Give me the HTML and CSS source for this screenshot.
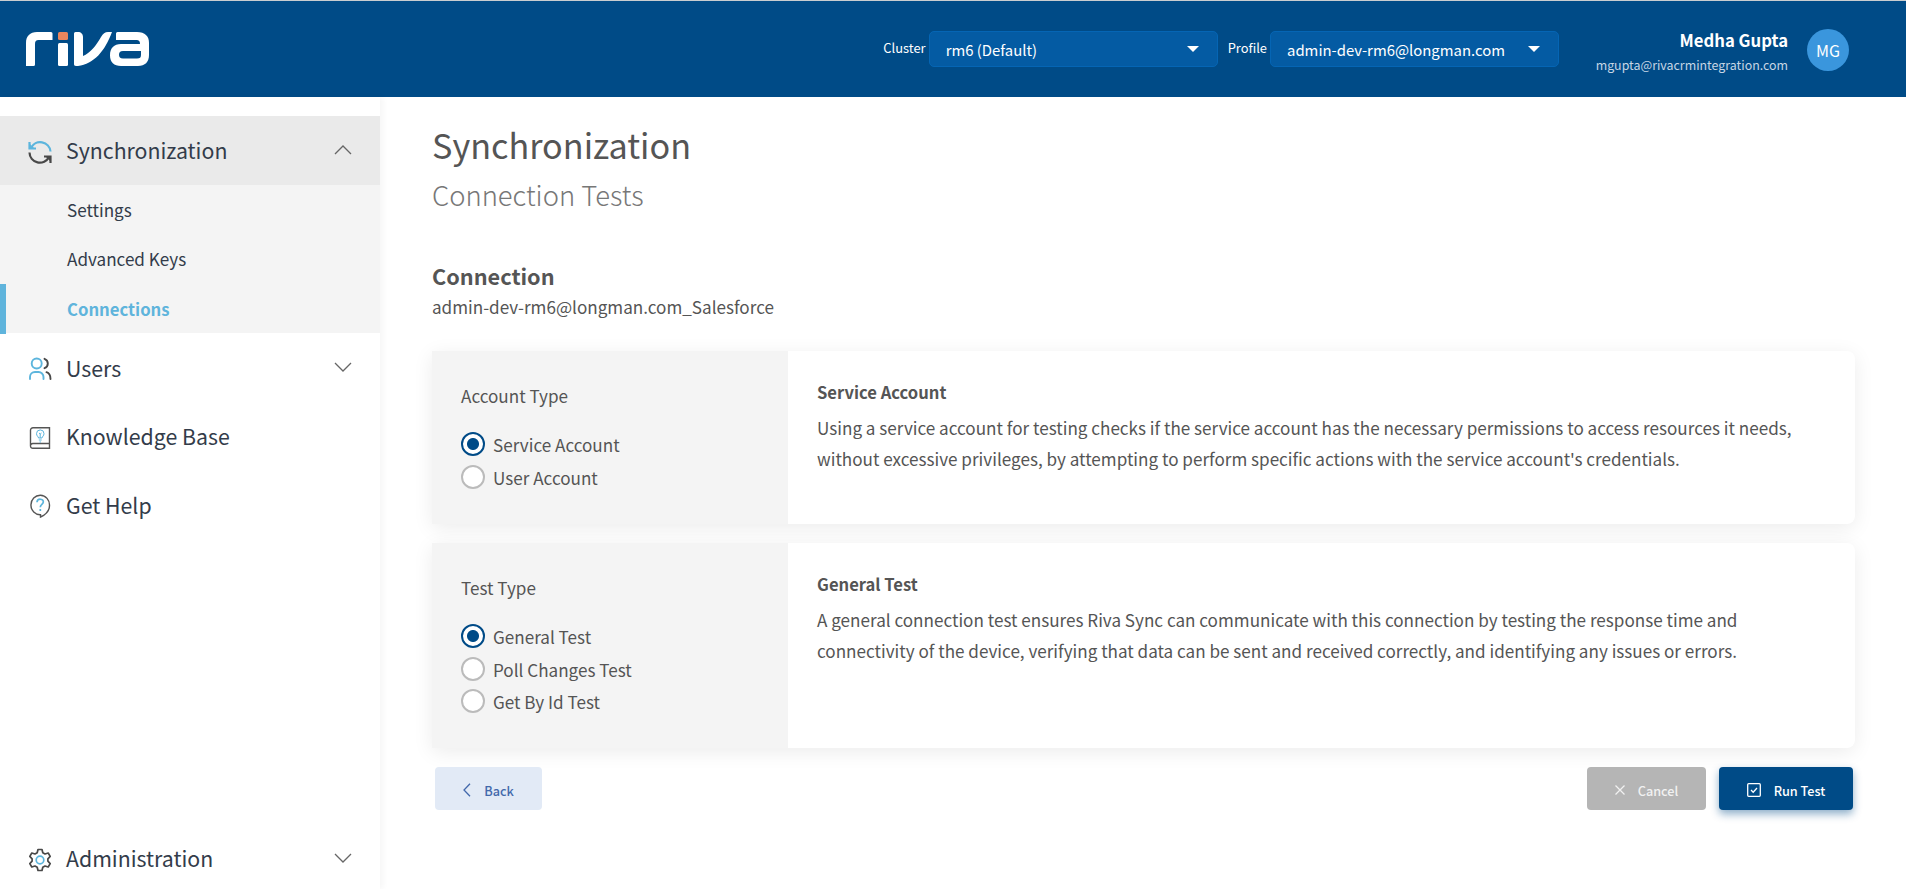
FILE: index.html
```
<!DOCTYPE html>
<html lang="en">
<head>
<meta charset="UTF-8" />
<meta name="viewport" content="width=device-width, initial-scale=1" />
<title>Riva - Connection Tests</title>
<link rel="stylesheet" href="styles.css">
</head>
<body>
  <header class="topbar">
    <svg class="logo" viewBox="0 0 123 34" role="img" aria-label="riva">
      <g fill="#fff">
        <path d="M0 34V11C0 4 4 0 11 0H25a1.5 1.5 0 0 1 1.500 1.500V8H12.500C10 8 9 9.500 9 12V32.500A1.500 1.500 0 0 1 7.500 34Z" />
        <rect x="32" y="11" width="10" height="23" rx="1.500" />
        <path d="M48 1.500A1.500 1.500 0 0 1 49.500 0H52C55 0 57 2 57 5V24C64 21 70 14 75 5 77 1.500 79 0 82 0H86C79 19 68 32 52 34H50C48.500 34 48 33 48 32Z" />
        <path fill-rule="evenodd" d="M90 8V1.500A1.500 1.500 0 0 1 91.500 0H111C119 0 123 4 123 11V23C123 30 119 34 112 34H95C88 34 84 30 84 23.500 84 16 88 12 95 12H114C114 9 113 8 110 8ZM97 19C94 19 93 20.500 93 22.700S94 26.500 97 26.500H111C114 26.500 115 25.500 115 22.700V19Z" />
      </g>
      <rect x="32" y="0" width="10" height="8" rx="1.500" fill="#e8865e" />
    </svg>

    <div class="filters">
      <span class="filter-label">Cluster</span>
      <button class="select" type="button">rm6 (Default)<i class="caret"></i></button>
      <span class="filter-label profile-label">Profile</span>
      <button class="select" type="button">admin-dev-rm6@longman.com<i class="caret"></i></button>
    </div>

    <div class="user">
      <div class="user-info">
        <strong class="user-name">Medha Gupta</strong>
        <span class="user-email">mgupta@rivacrmintegration.com</span>
      </div>
      <span class="avatar">MG</span>
    </div>
  </header>

  <div class="layout">
    <nav class="sidebar" aria-label="Main">
      <a class="nav-item open">
        <svg class="nav-icon" viewBox="0 0 24 24">
          <g fill="none" stroke="#5cb5dd" stroke-width="2.200"><path d="M3 8A10.300 10.300 0 0 1 22.500 11.500" /><path d="M1.500 2V8.500H8" /></g>
          <g fill="none" stroke="#484848" stroke-width="2.200"><path d="M1.500 12.500A10.300 10.300 0 0 0 21 17" /><path d="M16 16.500H22.500V23" /></g>
          <path fill="#5cb5dd" d="M1.500 3.500V8.500H6.500Z" />
          <path fill="#484848" d="M17.500 16.500H22.500V21.500Z" />
        </svg>
        <span>Synchronization</span>
        <svg class="chevron" viewBox="0 0 18 10"><path d="M1 9 9 1 17 9" /></svg>
      </a>
      <div class="subnav">
        <a class="subnav-item">Settings</a>
        <a class="subnav-item">Advanced Keys</a>
        <a class="subnav-item active">Connections</a>
      </div>
      <a class="nav-item users">
        <svg class="nav-icon" viewBox="0 0 24 24" fill="none" stroke-width="1.900" stroke-linecap="round">
          <g stroke="#5cb5dd"><circle cx="8.700" cy="6.500" r="5" /><path d="M2 22V20A5 5 0 0 1 7 15H10.500A5 5 0 0 1 15.500 20V22" /></g>
          <path stroke="#484848" d="M16.500 1.800A5 5 0 0 1 16.500 11.200M18.500 15.200C21 16 22.500 18 22.500 22" />
        </svg>
        <span>Users</span>
        <svg class="chevron" viewBox="0 0 18 10"><path d="M1 1 9 9 17 1" /></svg>
      </a>
      <a class="nav-item">
        <svg class="nav-icon" viewBox="0 0 24 24" fill="none">
          <path stroke="#555" stroke-width="1.400" d="M21.500 17.500V1.800H5A2.500 2.500 0 0 0 2.500 4.300V20A2.300 2.300 0 0 0 5 22.300H21.500V17.500H5A2.300 2.300 0 0 0 2.500 20" />
          <path stroke="#5cb5dd" d="M10.500 12C10.500 10.500 8.500 10 8.500 7.700A3.700 3.700 0 0 1 16 7.700C16 10 14 10.500 14 12ZM10.800 14H13.700M11.500 16H13M12.200 12V8L11 7M12.200 8 13.500 7" />
        </svg>
        <span>Knowledge Base</span>
      </a>
      <a class="nav-item">
        <svg class="nav-icon" viewBox="0 0 24 24" fill="none">
          <path stroke="#555" stroke-width="1.400" d="M12.500 20.700V23C17 21 21.500 17 21.500 11.500A9.300 9.700 0 1 0 12.500 20.700Z" />
          <path stroke="#5cb5dd" stroke-width="1.700" d="M9 8.300C9.200 4 15.500 4.500 15.300 8 15.200 10.500 12.300 10.300 12.300 13.200M12.300 15V17" />
        </svg>
        <span>Get Help</span>
      </a>
      <a class="nav-item admin">
        <svg class="nav-icon" viewBox="0 0 24 24" fill="none">
          <path stroke="#484848" stroke-width="1.700" stroke-linejoin="round" d="M10 1.500H14L14.800 4.800 17 6 20.200 5 22.200 8.400 19.900 10.800V13.200L22.200 15.600 20.200 19 17 18 14.800 19.200 14 22.500H10L9.200 19.200 7 18 3.800 19 1.800 15.600 4.100 13.200V10.800L1.800 8.400 3.800 5 7 6 9.200 4.800Z" />
          <circle cx="12" cy="12" r="3.800" stroke="#5cb5dd" stroke-width="1.700" />
        </svg>
        <span>Administration</span>
        <svg class="chevron" viewBox="0 0 18 10"><path d="M1 1 9 9 17 1" /></svg>
      </a>
    </nav>

    <main class="content">
      <h1>Synchronization</h1>
      <h2>Connection Tests</h2>
      <h3>Connection</h3>
      <p class="connection-name">admin-dev-rm6@longman.com_Salesforce</p>

      <section class="card account-card">
        <div class="card-options">
          <div class="options-title">Account Type</div>
          <label class="option"><input type="radio" name="account" checked /><span>Service Account</span></label>
          <label class="option"><input type="radio" name="account" /><span>User Account</span></label>
        </div>
        <div class="card-info">
          <h4>Service Account</h4>
          <p>Using a service account for testing checks if the service account has the necessary permissions to access resources it needs, without excessive privileges, by attempting to perform specific actions with the service account's credentials.</p>
        </div>
      </section>

      <section class="card test-card">
        <div class="card-options">
          <div class="options-title">Test Type</div>
          <label class="option"><input type="radio" name="test" checked /><span>General Test</span></label>
          <label class="option"><input type="radio" name="test" /><span>Poll Changes Test</span></label>
          <label class="option"><input type="radio" name="test" /><span>Get By Id Test</span></label>
        </div>
        <div class="card-info">
          <h4>General Test</h4>
          <p>A general connection test ensures Riva Sync can communicate with this connection by testing the response time and connectivity of the device, verifying that data can be sent and received correctly, and identifying any issues or errors.</p>
        </div>
      </section>

      <div class="actions">
        <button class="btn btn-back" type="button">
          <svg width="8" height="14" viewBox="0 0 8 14"><path d="M7 .8 1 7 7 13.200" /></svg>Back
        </button>
        <button class="btn btn-cancel" type="button">
          <svg width="10" height="10" viewBox="0 0 10 10"><path d="M.5 .5 9.500 9.500M9.500 .5 .5 9.500" /></svg>Cancel
        </button>
        <button class="btn btn-run" type="button">
          <svg width="14" height="14" viewBox="0 0 14 14"><rect x=".7" y=".7" width="12.600" height="12.600" rx="1" /><path d="M4 7 6.200 9.200 10 5" /></svg>Run Test
        </button>
      </div>
    </main>
  </div>
</body>
</html>
```
FILE: styles.css
```
*, *::before, *::after {
  box-sizing: border-box;
}

body {
  margin: 0;
  height: 100vh;
  display: flex;
  flex-direction: column;
  overflow: hidden;
  font-family: "Noto Sans CJK SC", "Noto Sans", sans-serif;
  font-size: 17.100px;
  color: #555;
  background: #fff;
}

h1, h2, h3, h4, p {
  margin: 0;
}

button {
  font-family: inherit;
  cursor: pointer;
}

/* Header */
.topbar {
  flex: none;
  display: flex;
  align-items: center;
  height: 97px;
  padding: 0 57px 0 26px;
  background: #004b87;
  border-top: 1px solid #c9cdd0;
  color: #fff;
}

.logo {
  width: 123px;
  height: 34px;
}

.filters {
  display: flex;
  align-items: center;
  margin-left: auto;
}

.filter-label {
  font-size: 12.900px;
  margin: 0 3px 3px 0;
}

.profile-label {
  margin-left: 10px;
}

.select {
  display: flex;
  align-items: center;
  justify-content: space-between;
  width: 289px;
  height: 36px;
  padding: 0 18px 0 16px;
  border: 1px solid #0565b4;
  border-radius: 5px;
  background: #045ba3;
  color: #fff;
  font-size: 14.900px;
}

.caret {
  border: 6px solid transparent;
  border-top: 6px solid #fff;
  border-bottom: 0;
}

.user {
  display: flex;
  align-items: center;
  width: 253px;
  margin-left: 37px;
  justify-content: flex-end;
  gap: 19px;
}

.user-info {
  display: flex;
  flex-direction: column;
  padding-top: 5px;
  text-align: right;
}

.user-name {
  font-size: 16.700px;
  line-height: 26px;
}

.user-email {
  font-size: 12.400px;
  line-height: 24px;
  color: #c6d6e5;
}

.avatar {
  flex: none;
  display: flex;
  align-items: center;
  justify-content: center;
  width: 42px;
  height: 42px;
  margin-top: 2px;
  border-radius: 50%;
  background: #3a96dd;
  font-size: 16px;
}

/* Sidebar */
.layout {
  flex: 1;
  display: flex;
  min-height: 0;
}

.sidebar {
  width: 380px;
  display: flex;
  flex-direction: column;
  padding-top: 19px;
  box-shadow: 3px 0 6px rgb(0 0 0 / 0.04);
}

.nav-item {
  flex: none;
  display: flex;
  align-items: center;
  height: 68.500px;
  padding: 0 28px 2px;
  font-size: 21.300px;
  color: #333c4a;
}

.nav-item.open {
  height: 69px;
  background: #eaeaea;
}

.nav-icon {
  width: 24px;
  height: 24px;
  margin: 4px 14px 0 0;
}

.chevron {
  width: 18px;
  height: 10px;
  margin-left: auto;
  fill: none;
  stroke: #666;
  stroke-width: 1.300;
}

.subnav {
  height: 148px;
  background: #f4f4f4;
}

.subnav-item {
  display: flex;
  align-items: center;
  height: 49.500px;
  padding: 0 0 1px 67px;
  color: #333c4a;
}

.subnav-item.active {
  padding: 0 0 0 61px;
  border-left: 6px solid #5fb4dc;
  color: #5fb4dc;
  font-weight: 700;
  font-size: 16.700px;
}

.nav-item.users {
  margin-top: 1px;
}

.nav-item.admin {
  margin-top: auto;
  margin-bottom: -4px;
}

/* Main content */
.content {
  flex: 1;
  padding: 22px 51px 0 52px;
}

h1 {
  font-size: 34.200px;
  font-weight: 400;
  line-height: 50px;
}

h2 {
  font-size: 27.400px;
  font-weight: 300;
  line-height: 50px;
  color: #777;
}

h3 {
  margin-top: 40px;
  font-size: 21.700px;
  font-weight: 700;
  line-height: 34px;
}

.connection-name {
  line-height: 28px;
}

.card {
  display: flex;
  border-radius: 0 8px 8px 0;
  background: #fff;
  box-shadow: 0 4px 20px rgb(0 0 0 / 0.08);
  overflow: hidden;
}

.account-card {
  height: 173px;
  margin-top: 30px;
}

.test-card {
  height: 205px;
  margin-top: 19px;
}

.card-options {
  width: 356px;
  padding: 29px 29px;
  background: #f4f4f4;
}

.options-title {
  line-height: 31px;
  margin-bottom: 17px;
}

.option {
  display: flex;
  align-items: center;
  gap: 8px;
  height: 32.500px;
}

.option span {
  margin-top: 1px;
}

.option input {
  appearance: none;
  width: 24px;
  height: 24px;
  margin: 0;
  border: 2px solid #bbb;
  border-radius: 50%;
  background: #fff;
}

.option input:checked {
  border-color: #004b87;
  background: radial-gradient(circle, #004b87 5.500px, #fff 6.500px);
}

.card-info {
  flex: 1;
  padding: 25px 40px 0 29px;
}

h4 {
  font-size: 16.600px;
  font-weight: 700;
  line-height: 32px;
}

.card-info p {
  margin-top: 4px;
  line-height: 31px;
}

.actions {
  display: flex;
  gap: 13px;
  margin: 19px 2px 0 3px;
}

.btn {
  display: flex;
  align-items: center;
  justify-content: center;
  gap: 13px;
  height: 43px;
  padding-top: 4px;
  border: 0;
  border-radius: 4px;
  font-size: 12.700px;
  font-weight: 500;
}

.btn svg {
  fill: none;
  stroke: currentColor;
  stroke-width: 1.300;
}

.btn-back {
  width: 107px;
  margin-right: auto;
  background: #e2eaf6;
  color: #4268ab;
}

.btn-cancel {
  width: 119px;
  background: #b5b5b5;
  color: #f1f1f1;
}

.btn-run {
  width: 134px;
  background: #004b87;
  color: #fff;
  box-shadow: 0 4px 8px rgb(0 75 135 / 0.45);
}
```
